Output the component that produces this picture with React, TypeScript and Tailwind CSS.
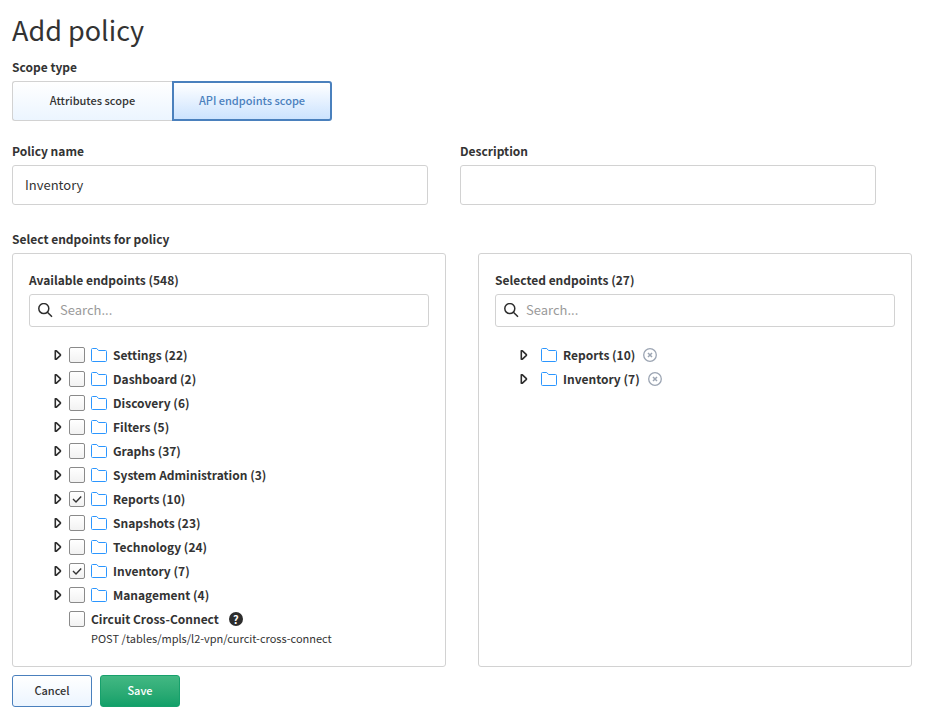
import { useState } from 'react';

type Folder = { name: string; count: number };

const available: Folder[] = [
  { name: 'Settings', count: 22 },
  { name: 'Dashboard', count: 2 },
  { name: 'Discovery', count: 6 },
  { name: 'Filters', count: 5 },
  { name: 'Graphs', count: 37 },
  { name: 'System Administration', count: 3 },
  { name: 'Reports', count: 10 },
  { name: 'Snapshots', count: 23 },
  { name: 'Technology', count: 24 },
  { name: 'Inventory', count: 7 },
  { name: 'Management', count: 4 },
];

function FolderIcon() {
  return (
    <svg width="16" height="14" viewBox="0 0 16 14" fill="none" stroke="#2b96ff" className="shrink-0" aria-hidden="true">
      <path d="M1.5.5h4.2l1.9 2h6.9a1 1 0 0 1 1 1v9a1 1 0 0 1-1 1h-13a1 1 0 0 1-1-1v-11a1 1 0 0 1 1-1z" />
    </svg>
  );
}

function Expander({ name }: { name: string }) {
  return (
    <button type="button" aria-label={`Expand ${name}`} className="flex w-3 shrink-0 justify-center">
      <svg width="8" height="12" viewBox="0 0 8 12" fill="none" stroke="#2d2d2d" strokeWidth="1.6" strokeLinejoin="round">
        <path d="M1.3 1.8h1.1L6.4 5.6v.8L2.4 10.2H1.3z" />
      </svg>
    </button>
  );
}

function Tick({ label, checked, onChange }: { label: string; checked: boolean; onChange: () => void }) {
  return (
    <span className="grid h-4 w-4 shrink-0">
      <input
        type="checkbox"
        aria-label={label}
        checked={checked}
        onChange={onChange}
        className="col-start-1 row-start-1 h-4 w-4 appearance-none rounded-[2px] border border-[#8a8a8a] bg-linear-to-b from-white to-[#f2f2f2]"
      />
      {checked && (
        <svg width="16" height="16" viewBox="0 0 16 16" fill="none" stroke="#333333" strokeWidth="1.4" className="pointer-events-none col-start-1 row-start-1" aria-hidden="true">
          <path d="M4 8l3 3 5.2-5.6" />
        </svg>
      )}
    </span>
  );
}

function Search({ label }: { label: string }) {
  return (
    <div className="mt-1 flex h-[33px] items-center gap-[7px] rounded-[3px] border border-[#d2d2d2] px-2">
      <svg width="15" height="15" viewBox="0 0 15 15" fill="none" stroke="#2d2d2d" strokeWidth="1.5" className="shrink-0" aria-hidden="true">
        <circle cx="5.8" cy="5.6" r="5" />
        <path d="M9.4 9.2l4.6 4.6" />
      </svg>
      <input type="search" aria-label={label} placeholder="Search..." className="h-5 min-w-0 flex-1 pb-[2px] text-[13px] leading-5 outline-none placeholder:text-[#9a9a9a]" />
    </div>
  );
}

const labelClass = 'block text-[12px] leading-5 font-bold';
const fieldClass = 'mt-1 block h-10 w-full rounded-[3px] border border-[#d2d2d2] px-3 pb-[2px] text-[13px] leading-5 outline-none';
const panelClass = 'min-w-0 rounded-[3px] border border-[#d2d2d2] px-4 pt-4 pb-[19px]';

export default function App() {
  const [picked, setPicked] = useState<string[]>(['Reports', 'Inventory']);
  const toggle = (name: string) =>
    setPicked((now) => (now.includes(name) ? now.filter((n) => n !== name) : [...now, name]));

  return (
    <main className="bg-white pt-3 pr-[14px] pb-[14px] pl-3 font-['Noto_Sans_CJK_SC',sans-serif] text-[13px] leading-5 text-[#333333]">
      <h1 className="text-[27px] leading-9">Add policy</h1>

      <fieldset className="mt-[9px]">
        <legend className={labelClass}>Scope type</legend>
        <div className="mt-1 flex text-[11px] font-medium">
          <button type="button" className="h-10 w-40 rounded-l-[3px] border border-r-0 border-[#d2d2d2] bg-linear-to-b from-white to-[#ecf5ff] pb-[2px]">
            Attributes scope
          </button>
          <button type="button" className="h-10 w-40 rounded-r-[3px] border-2 border-[#4a80bd] bg-linear-to-b from-white to-[#cce3fe] pb-[2px] text-[#4a80bd]">
            API endpoints scope
          </button>
        </div>
      </fieldset>

      <div className="mt-5 grid grid-cols-2 gap-8 pr-9">
        <div>
          <label htmlFor="policy-name" className={labelClass}>Policy name</label>
          <input id="policy-name" type="text" defaultValue="Inventory" className={fieldClass} />
        </div>
        <div>
          <label htmlFor="description" className={labelClass}>Description</label>
          <input id="description" type="text" className={fieldClass} />
        </div>
      </div>

      <h2 className={`mt-6 ${labelClass}`}>Select endpoints for policy</h2>
      <div className="mt-1 grid grid-cols-2 gap-8">
        <section className={panelClass}>
          <h3 className={labelClass}>Available endpoints (548)</h3>
          <Search label="Search available endpoints" />
          <ul className="mt-4 pl-[23px]">
            {available.map(({ name, count }) => (
              <li key={name} className="flex h-6 items-center">
                <Expander name={name} />
                <span className="ml-[5px] flex items-center gap-[6px]">
                  <Tick label={name} checked={picked.includes(name)} onChange={() => toggle(name)} />
                  <FolderIcon />
                  <span className={labelClass}>{name} ({count})</span>
                </span>
              </li>
            ))}
            <li className="pl-[17px]">
              <div className="flex h-6 items-center gap-[6px]">
                <Tick label="Circuit Cross-Connect" checked={picked.includes('Circuit')} onChange={() => toggle('Circuit')} />
                <span className={labelClass}>Circuit Cross-Connect</span>
                <button type="button" aria-label="Help" className="ml-1 flex h-[14px] w-[14px] items-center justify-center rounded-full bg-[#2d2d2d] text-[11px] leading-none font-bold text-white">
                  ?
                </button>
              </div>
              <p className="-mt-px mb-px pl-[22px] text-[11px] leading-4">POST /tables/mpls/l2-vpn/curcit-cross-connect</p>
            </li>
          </ul>
        </section>

        <section className={panelClass}>
          <h3 className={labelClass}>Selected endpoints (27)</h3>
          <Search label="Search selected endpoints" />
          <ul className="mt-4 pl-[23px]">
            {available.filter(({ name }) => picked.includes(name)).map(({ name, count }) => (
              <li key={name} className="flex h-6 items-center">
                <Expander name={name} />
                <span className="ml-[11px] flex items-center gap-[6px]">
                  <FolderIcon />
                  <span className={labelClass}>{name} ({count})</span>
                  <button type="button" aria-label={`Remove ${name}`} onClick={() => toggle(name)} className="ml-[2px]">
                    <svg width="14" height="14" viewBox="0 0 14 14" fill="none" stroke="#9ca5b3" strokeWidth="1.3">
                      <circle cx="7" cy="7" r="6.3" />
                      <path d="M5 5l4 4M9 5l-4 4" strokeWidth="1.5" />
                    </svg>
                  </button>
                </span>
              </li>
            ))}
          </ul>
        </section>
      </div>

      <div className="mt-2 flex gap-2 text-[11px] font-medium">
        <button type="button" className="h-8 w-20 rounded-[3px] border border-[#4a80bd] bg-linear-to-b from-white to-[#ecf5ff] pb-[2px]">
          Cancel
        </button>
        <button type="submit" className="h-8 w-20 rounded-[3px] border border-[#17a06c] bg-linear-to-b from-[#42b883] to-[#10a069] pb-[2px] text-white">
          Save
        </button>
      </div>
    </main>
  );
}
